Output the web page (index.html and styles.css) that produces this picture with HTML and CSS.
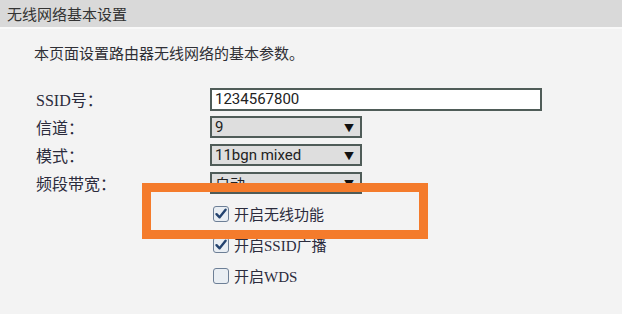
FILE: index.html
```html
<!DOCTYPE html>
<html lang="zh-CN">
<head>
  <meta charset="UTF-8" />
  <meta name="viewport" content="width=device-width, initial-scale=1.0"/>
  <title>无线网络基本设置</title>
  <link rel="stylesheet" href="styles.css">
</head>
<body>
  <div class="title-bar">无线网络基本设置</div>

  <div class="panel">
    <p class="intro">本页面设置路由器无线网络的基本参数。</p>

    <div class="form">
      <div class="label">SSID号：</div>
      <div class="field"><input class="text-input" type="text" value="1234567800"></div>

      <div class="label">信道：</div>
      <div class="field"><div class="select-box"><span>9</span><span class="arrow">▼</span></div></div>

      <div class="label">模式：</div>
      <div class="field"><div class="select-box"><span>11bgn mixed</span><span class="arrow">▼</span></div></div>

      <div class="label">频段带宽：</div>
      <div class="field"><div class="select-box"><span>自动</span><span class="arrow">▼</span></div></div>
    </div>

    <div class="checks">
      <label class="check-row">
        <span class="box checked">
          <svg viewBox="0 0 16 16" width="16" height="16"><path d="M3.5 8.2 L6.6 11.3 L12.6 3.8" fill="none" stroke="#24436f" stroke-width="2.4" stroke-linecap="round" stroke-linejoin="round"/></svg>
        </span>
        开启无线功能
      </label>
      <label class="check-row">
        <span class="box checked">
          <svg viewBox="0 0 16 16" width="16" height="16"><path d="M3.5 8.2 L6.6 11.3 L12.6 3.8" fill="none" stroke="#24436f" stroke-width="2.4" stroke-linecap="round" stroke-linejoin="round"/></svg>
        </span>
        开启SSID广播
      </label>
      <label class="check-row">
        <span class="box"></span>
        开启WDS
      </label>
    </div>

    <!-- highlight frame drawn over the screenshot -->
    <div class="highlight"></div>
  </div>
</body>
</html>
```

FILE: styles.css
```css
body {
  margin: 0;
  background: #f3f3f3;
  font-family: "Noto Sans CJK SC", sans-serif;
  color: #333;
  width: 622px;
  height: 314px;
  overflow: hidden;
}

.title-bar {
  height: 27px;
  line-height: 27px;
  padding-left: 7px;
  background: #d9d9d9;
  border-bottom: 2px solid #f9f9f9;
  font-size: 15px;
  color: #333;
}

.panel {
  position: relative;
  padding: 0 0 0 36px;
}

.intro {
  margin: 0 0 0 -2px;
  padding-top: 13px;
  height: 43px;
  font-size: 15px;
  line-height: 22px;
  color: #2f2f35;
}

.form {
  display: grid;
  grid-template-columns: 174px 332px;
  grid-auto-rows: 28px;
  align-items: center;
}

.label {
  font-family: "Liberation Serif", "Noto Sans CJK SC", serif;
  font-size: 16px;
  color: #2b2b3c;
}

.text-input {
  box-sizing: border-box;
  width: 332px;
  height: 23px;
  margin: 0;
  padding: 0 3px;
  border: 2px solid #4f5c58;
  background: #fff;
  font-family: Roboto, sans-serif;
  font-size: 15px;
  color: #222;
  display: block;
}

.select-box {
  box-sizing: border-box;
  width: 152px;
  height: 22px;
  padding: 0 6px 0 3px;
  border: 2px solid #4f5c58;
  background: #dedede;
  display: flex;
  justify-content: space-between;
  align-items: center;
  font-family: Roboto, "Noto Sans CJK SC", sans-serif;
  font-size: 15px;
  color: #222;
}

.arrow {
  font-size: 10px;
  color: #111;
}

.checks {
  padding: 1px 0 0 177px;
}

.check-row {
  display: flex;
  align-items: center;
  gap: 5px;
  height: 31px;
  font-family: "Liberation Serif", "Noto Sans CJK SC", serif;
  font-size: 15px;
  color: #2b2b3c;
}

.box {
  box-sizing: border-box;
  width: 16px;
  height: 16px;
  border: 1.5px solid #6d7f96;
  border-radius: 3px;
  background: #e9eef3;
  display: flex;
  align-items: center;
  justify-content: center;
}

.box svg {
  display: block;
  margin: -1.5px;
}

.highlight {
  position: absolute;
  left: 142px;
  top: 154px;
  width: 268px;
  height: 38px;
  border: 9px solid #f47b2b;
}
```
